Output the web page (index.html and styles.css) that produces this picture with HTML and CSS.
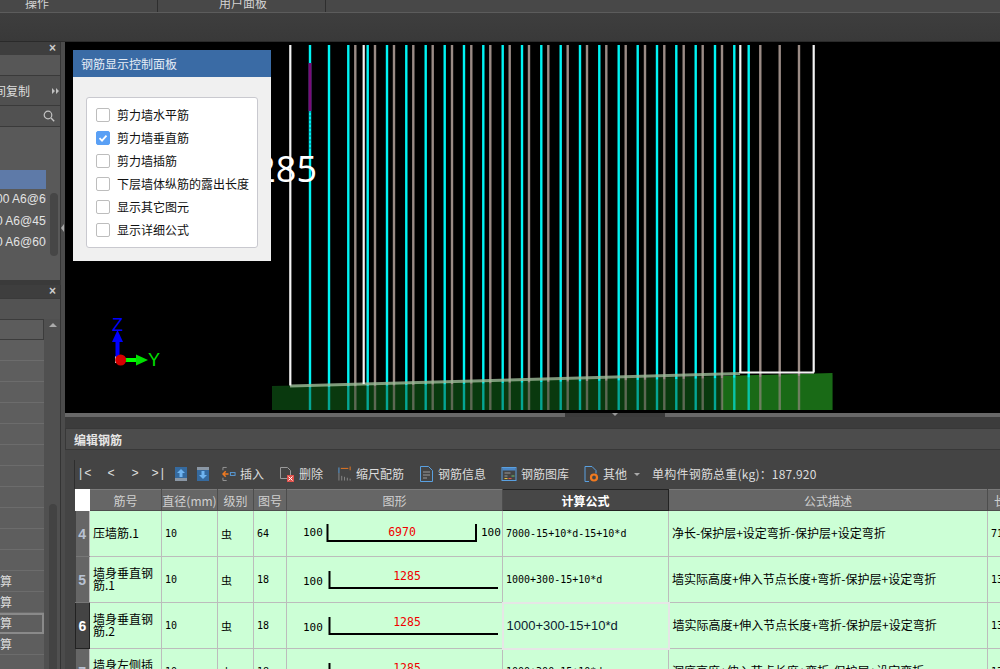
FILE: index.html
```html
<!DOCTYPE html>
<html lang="zh-CN">
<head>
<meta charset="utf-8">
<title>编辑钢筋</title>
<link rel="stylesheet" href="styles.css">
</head>
<body>
<header class="ribbon">
  <div class="ribbon-tabs">
    <div class="ribbon-tab t1">操作</div>
    <div class="ribbon-tab t2">用户面板</div>
  </div>
  <div class="ribbon-body"></div>
</header>
<div class="main">
  <aside class="side">
    <section class="dock dock-a">
      <div class="dock-head"><span class="close">×</span></div>
      <div class="row-plain"></div>
      <div class="row-copy"><span class="copy-text">间复制</span><svg class="more" width="7" height="6" viewBox="0 0 7 6"><path d="M0 0l3 3-3 3zM4 0l3 3-3 3z" fill="#c0c0c0"/></svg></div>
      <div class="row-search">
        <svg class="search-ico" width="12" height="12" viewBox="0 0 12 12"><circle cx="5" cy="5" r="3.8" fill="none" stroke="#c4c4c4" stroke-width="1.2"/><path d="M8 8l3.2 3.2" stroke="#c4c4c4" stroke-width="1.4"/></svg>
      </div>
      <div class="list">
        <div class="list-gap"></div>
        <div class="list-sel"></div>
        <div class="list-items">
          <div class="list-item i1">00 A6@600</div>
          <div class="list-item i2">0 A6@450</div>
          <div class="list-item i2">0 A6@600</div>
          <div class="thumb-small"></div>
        </div>
      </div>
    </section>
    <section class="dock dock-b">
      <div class="dock-head"><span class="close">×</span></div>
      <div class="row-plain2"></div>
      <div class="grid-wrap">
        <div class="grid-rows">
          <div class="grid-head"></div>
          <div class="grid-row"></div><div class="grid-row"></div><div class="grid-row"></div>
          <div class="grid-row"></div><div class="grid-row"></div><div class="grid-row"></div>
          <div class="grid-row"></div><div class="grid-row"></div><div class="grid-row"></div>
          <div class="grid-row"></div><div class="grid-row"></div>
          <div class="grid-row"><span>算</span></div>
          <div class="grid-row"><span>算</span></div>
          <div class="grid-row sel"><span>算</span></div>
          <div class="grid-row"><span>算</span></div>
          <div class="grid-row"></div>
        </div>
        <div class="scroll-track"><span class="scroll-up"></span><div class="scroll-thumb"></div></div>
      </div>
    </section>
  </aside>
  <div class="gutter"><span class="gutter-arrow"></span></div>
  <div class="work">
    <div class="viewport">
      <svg class="scene" width="935" height="371" viewBox="65 42 935 371">
        <polygon points="272,386 722,376 722,410 272,410" fill="#0a3a0f"/>
        <polygon points="722,376 832.500,373 832.500,410 722,410" fill="#1a6b16"/>
        <path class="bars-cyan" d="M310 45V410M329 45V410M348.300 45V410M367.700 45V410M387 45V410M406.300 45V410M425.700 45V410M444.700 45V410M464 45V410M483.300 45V410M502.700 45V410M522 45V410M541.300 45V410M560.700 45V410M580 45V410M599.300 45V410M618.700 45V410M637.700 45V410M657 45V410M676.300 45V410M695.700 45V410M715 45V410M734.300 45V410M748.700 45V410"/>
        <path class="bars-gray" d="M355.300 45V410M375 45V410M394 45V410M413.300 45V410M432.700 45V410M452 45V410M471.300 45V410M490.300 45V410M509.700 45V410M529 45V410M548.300 45V410M567.700 45V410M587 45V410M606.300 45V410M625.700 45V410M645 45V410M664.300 45V410M683.700 45V410M702.700 45V410M722 45V410M760.300 45V410M779.700 45V410M799 45V410"/>
        <polygon points="272,388 722,378 722,410 272,410" fill="#0a3a0f" opacity="0.42"/>
        <polygon points="722,378 832.500,375 832.500,410 722,410" fill="#1a6b16" opacity="0.35"/>
        <path class="band" d="M290 386L740 373.500"/>
        <path class="bars-white" d="M290.300 45V385.500M363.700 45V384M740.300 45V373M813.700 45V372.500M740 372.500H814"/>
        <path class="purple" d="M310 63V111"/>
        <path class="purple-dash" d="M310 111V150"/>
        <text class="dim-text" x="317" y="182" text-anchor="end">1285</text>
        <rect x="115" y="356" width="4" height="7" fill="#c8c8c8"/>
        <rect x="115.500" y="341" width="4" height="16" fill="#0000ff"/>
        <polygon points="117.500,330 123,342 112,342" fill="#0000ff"/>
        <rect x="124" y="358" width="13" height="4" fill="#00ff00"/>
        <polygon points="148,360 136,354.500 136,365.500" fill="#00e000"/>
        <circle cx="120.700" cy="360" r="5.500" fill="#d60000"/>
        <text class="axis-z" x="112" y="331">Z</text>
        <text class="axis-y" x="148" y="366">Y</text>
      </svg>
      <div class="control-panel">
        <div class="control-title">钢筋显示控制面板</div>
        <div class="control-body">
          <div class="control-box">
            <label class="opt"><span class="check"></span>剪力墙水平筋</label>
            <label class="opt"><span class="check on"><svg width="14" height="14" viewBox="0 0 14 14"><path d="M3.500 7.200l2.500 2.500 4.500-5" fill="none" stroke="#fff" stroke-width="1.800"/></svg></span>剪力墙垂直筋</label>
            <label class="opt"><span class="check"></span>剪力墙插筋</label>
            <label class="opt"><span class="check"></span>下层墙体纵筋的露出长度</label>
            <label class="opt"><span class="check"></span>显示其它图元</label>
            <label class="opt"><span class="check"></span>显示详细公式</label>
          </div>
        </div>
      </div>
    </div>
    <div class="splitter"><div class="splitter-grip"><span class="splitter-caret"></span></div></div>
    <div class="split-gap"></div>
    <div class="editor-title">编辑钢筋</div>
    <div class="editor">
      <div class="toolbar">
        <span class="nav n1">|&lt;</span><span class="nav n2">&lt;</span><span class="nav n3">&gt;</span><span class="nav n4">&gt;|</span>
        <svg class="tool-ico ud" width="12" height="14" viewBox="0 0 12 14"><rect width="12" height="14" fill="#8a97a5"/><rect x="0" y="0" width="12" height="11" fill="#356a9f"/><path d="M6 2l4 4H7.500v4h-3V6H2z" fill="#6fb4f0"/></svg>
        <svg class="tool-ico ud" width="12" height="14" viewBox="0 0 12 14"><rect width="12" height="14" fill="#8a97a5"/><rect x="0" y="3" width="12" height="11" fill="#356a9f"/><path d="M6 12l4-4H7.500V4h-3v4H2z" fill="#6fb4f0"/></svg>
        <span class="tool first">
          <svg width="14" height="16" viewBox="0 0 15 16"><path d="M1 1h4M1 1v3M1 15h4M1 15v-3" stroke="#9a9a9a" fill="none"/><path d="M1 8h6M4 5L1 8l3 3" stroke="#f07a20" stroke-width="1.600" fill="none"/><rect x="9" y="6.500" width="5" height="3" fill="none" stroke="#5aa0e0"/></svg>插入</span>
        <span class="tool">
          <svg width="16" height="16" viewBox="0 0 16 16"><path d="M1.500 1.500h7l3 3v8h-10z" fill="none" stroke="#9a9a9a"/><rect x="8" y="9" width="7" height="7" fill="#e0524c"/><path d="M9.500 10.500l4 4M13.500 10.500l-4 4" stroke="#fff"/></svg>删除</span>
        <span class="tool">
          <svg width="14" height="16" viewBox="0 0 15 16"><path d="M1 7v8M4 15v-5M7 15v-4M10 15v-3M13 15v-2" stroke="#8a8a8a" fill="none"/><path d="M1 1v6" stroke="#5aa0e0" fill="none"/><path d="M3 2h8" stroke="#f07a20"/><path d="M13 0v4" stroke="#f07a20"/></svg>缩尺配筋</span>
        <span class="tool">
          <svg width="15" height="16" viewBox="0 0 14 16"><path d="M1 .5h8l4 4v11H1z" fill="none" stroke="#5aa0e0"/><path d="M3.500 6h7M3.500 9h7M3.500 12h4" stroke="#9a9a9a"/></svg>钢筋信息</span>
        <span class="tool">
          <svg width="16" height="14" viewBox="0 0 15 14"><rect x=".5" y=".5" width="14" height="13" fill="none" stroke="#5aa0e0"/><rect x="1" y="1" width="13" height="2.500" fill="#4a86c5"/><path d="M3 6h6M3 9h3" stroke="#9a9a9a"/><path d="M3 11.500h3" stroke="#e0c040"/><path d="M7 11.500h3" stroke="#e0524c"/><path d="M10 9h3" stroke="#6fc06f"/></svg>钢筋图库</span>
        <span class="tool">
          <svg width="15" height="16" viewBox="0 0 15 16"><path d="M1 .5h7l4 4v3M5 15.500H1V.5" fill="none" stroke="#5aa0e0"/><circle cx="10" cy="11.500" r="3" fill="none" stroke="#f07a20" stroke-width="2.200"/></svg>其他</span>
        <span class="caret"></span>
        <span class="total">单构件钢筋总重(kg)：187.920</span>
      </div>
      <table class="rebar">
        <colgroup>
          <col class="c0"><col class="c1"><col class="c2"><col class="c3"><col class="c4"><col class="c5"><col class="c6"><col class="c7"><col class="c8">
        </colgroup>
        <thead>
          <tr>
            <th class="corner"></th><th>筋号</th><th>直径(mm)</th><th>级别</th><th>图号</th><th>图形</th><th class="active">计算公式</th><th>公式描述</th><th class="long">长度(mm)</th>
          </tr>
        </thead>
        <tbody>
          <tr>
            <th class="num">4</th><td class="name">压墙筋.1</td><td class="mono">10</td><td class="grade">虫</td><td class="mono">64</td>
            <td class="shape"><svg width="215" height="45" viewBox="287 512 215 45"><text class="s-end" x="303" y="537">100</text><path class="s-line" d="M327.500 525V542H476V525"/><text class="s-red" x="402" y="537" text-anchor="middle">6970</text><text class="s-end" x="481" y="537">100</text></svg></td>
            <td class="mono">7000-15+10*d-15+10*d</td><td class="desc">净长-保护层+设定弯折-保护层+设定弯折</td><td class="mono">7170</td>
          </tr>
          <tr>
            <th class="num">5</th><td class="name">墙身垂直钢筋.1</td><td class="mono">10</td><td class="grade">虫</td><td class="mono">18</td>
            <td class="shape"><svg width="215" height="45" viewBox="287 558 215 45"><text class="s-end" x="303" y="586">100</text><path class="s-line" d="M329.500 572V589H498"/><text class="s-red" x="407" y="581" text-anchor="middle">1285</text></svg></td>
            <td class="mono">1000+300-15+10*d</td><td class="desc">墙实际高度+伸入节点长度+弯折-保护层+设定弯折</td><td class="mono">1385</td>
          </tr>
          <tr>
            <th class="num cur">6</th><td class="name">墙身垂直钢筋.2</td><td class="mono">10</td><td class="grade">虫</td><td class="mono">18</td>
            <td class="shape"><svg width="215" height="45" viewBox="287 604 215 45"><text class="s-end" x="303" y="632">100</text><path class="s-line" d="M329.500 618V635H498"/><text class="s-red" x="407" y="627" text-anchor="middle">1285</text></svg></td>
            <td class="edit">1000+300-15+10*d</td><td class="desc">墙实际高度+伸入节点长度+弯折-保护层+设定弯折</td><td class="mono">1385</td>
          </tr>
          <tr>
            <th class="num">7</th><td class="name">墙身左侧插筋.1</td><td class="mono">10</td><td class="grade">虫</td><td class="mono">18</td>
            <td class="shape"><svg width="215" height="45" viewBox="287 650 215 45"><text class="s-end" x="303" y="678">100</text><path class="s-line" d="M329.500 664V681H498"/><text class="s-red" x="407" y="673" text-anchor="middle">1285</text></svg></td>
            <td class="mono">1000+300-15+10*d</td><td class="desc">洞底高度+伸入节点长度+弯折-保护层+设定弯折</td><td class="mono">1385</td>
          </tr>
        </tbody>
      </table>
    </div>
  </div>
</div>
</body>
</html>
```

FILE: styles.css
```css
* { box-sizing: border-box; }
html, body { margin: 0; height: 100%; }
body {
  width: 1000px; height: 669px; overflow: hidden; background: #3c3c3c;
  font: 12px "Noto Sans CJK SC", "Liberation Sans", sans-serif; color: #ddd;
  display: flex; flex-direction: column;
}
.ribbon { flex: none; height: 42px; display: flex; flex-direction: column; }
.ribbon-tabs { height: 13px; flex: none; display: flex; background: #484848; border-bottom: 1px solid #5c5c5c; overflow: hidden; }
.ribbon-tab { height: 12px; line-height: 6px; text-align: center; border-right: 1px solid #2e2e2e; color: #d4d4d4; }
.t1 { width: 158px; padding-right: 83px; }
.t2 { width: 168px; padding-left: 3px; }
.ribbon-body { flex: 1; background: linear-gradient(#3e3e3e, #393939); border-bottom: 1px solid #2a2a2a; }

.main { flex: 1; min-height: 0; display: flex; }
.side { width: 61px; flex: none; display: flex; flex-direction: column; gap: 5px; background: #3a3a3a; overflow: hidden; }
.dock { display: flex; flex-direction: column; background: #555; border-right: 1px solid #333; }
.dock-a { height: 238px; flex: none; }
.dock-b { flex: 1; min-height: 0; }
.dock-head { height: 13px; flex: none; background: #3e3e3e; display: flex; justify-content: flex-end; padding-right: 4px; }
.close { font: bold 12px/12px "Liberation Sans", sans-serif; color: #ccc; }
.row-plain { height: 21px; flex: none; background: #575757; border-bottom: 1px solid #3a3a3a; }
.row-copy { height: 30px; flex: none; background: #505050; border-bottom: 1px solid #3a3a3a; display: flex; align-items: center; overflow: hidden; position: relative; }
.copy-text { margin-left: -6px; white-space: nowrap; color: #ddd; font-size: 12px; }
.more { flex: none; margin-left: 22px; }
.row-search { height: 21px; flex: none; background: #515151; border-bottom: 1px solid #3a3a3a; display: flex; align-items: center; justify-content: flex-end; padding-right: 5px; }
.list { flex: 1; background: #595959; overflow: hidden; }
.list-gap { height: 43px; }
.list-sel { width: 46px; height: 19px; background: #5e7aa8; }
.list-items { position: relative; padding-top: 0; }
.list-item { height: 21.500px; white-space: nowrap; overflow: hidden; font: 12px/21px "Liberation Sans", sans-serif; color: #e4e4e4; }
.i1 { margin-left: -4px; width: 50px; }
.i2 { margin-left: -4px; width: 50px; }
.thumb-small { position: absolute; top: 4px; left: 50px; width: 8px; height: 63px; border-radius: 4px; background: #464646; }

.row-plain2 { height: 21px; flex: none; background: #535353; border-top: 1px solid #3a3a3a; }
.grid-wrap { flex: 1; min-height: 0; display: flex; overflow: hidden; }
.grid-rows { width: 44px; flex: none; }
.grid-head { height: 21px; background: #5c5c5c; border: 1px solid #3c3c3c; border-left: 0; }
.grid-row { height: 21px; background: #5e5e5e; border-bottom: 1px solid #6c6c6c; color: #ddd; font-size: 12px; line-height: 20px; overflow: hidden; }
.grid-row.sel { border: 2px solid #8a8a8a; line-height: 16px; border-left: 0; }
.scroll-track { flex: 1; position: relative; background: #505050; }
.scroll-up { position: absolute; top: 4px; left: 5px; border: 4px solid transparent; border-top: 0; border-bottom: 4px solid #aaa; }
.scroll-thumb { position: absolute; top: 185px; left: 5px; width: 8px; bottom: -30px; border-radius: 4px; background: #434343; }

.gutter { width: 4px; flex: none; background: #4b4b4b; position: relative; }
.gutter-arrow { position: absolute; top: 182px; left: 0; border: 4px solid transparent; border-left: 0; border-right: 3px solid #aaa; }

.work { flex: 1; min-width: 0; display: flex; flex-direction: column; overflow: hidden; }
.viewport { height: 371px; flex: none; background: #000; position: relative; overflow: hidden; }
.scene { display: block; }
.bars-cyan { stroke: #00f4f4; stroke-width: 2.400; fill: none; }
.bars-gray { stroke: #9a8b85; stroke-width: 2.400; fill: none; }
.bars-white { stroke: #f4f4f4; stroke-width: 2.200; fill: none; }
.band { stroke: #9dbc98; stroke-width: 3; fill: none; opacity: .8; }
.purple { stroke: #7a0a78; stroke-width: 3; fill: none; }
.purple-dash { stroke: #00b8c8; stroke-width: 2; stroke-dasharray: 2 2; fill: none; }
.dim-text { font: 36px "Open Sans", sans-serif; fill: #fff; }
.axis-z { font: 18px "Liberation Sans", sans-serif; fill: #0000ff; }
.axis-y { font: 18px "Liberation Sans", sans-serif; fill: #00e000; }

.control-panel { position: absolute; left: 8px; top: 8px; width: 198px; height: 211px; background: #f0f0f0; display: flex; flex-direction: column; }
.control-title { height: 27px; flex: none; background: #3a6ba5; color: #e6edf6; padding-left: 8px; line-height: 27px; font-size: 12px; }
.control-body { flex: 1; padding: 20px 13px 13px; }
.control-box { height: 151px; background: #fff; border: 1px solid #c9c9cf; border-radius: 3px; padding: 5px 9px; display: flex; flex-direction: column; }
.opt { height: 23px; flex: none; display: flex; align-items: center; gap: 7px; color: #111; font-size: 12px; white-space: nowrap; }
.check { width: 14px; height: 14px; flex: none; border: 1px solid #bdbdbd; border-radius: 2px; background: #fff; }
.check.on { background: #5aa0f5; border-color: #5aa0f5; }
.check svg { display: block; margin: -1px; }

.splitter { height: 4px; flex: none; background: #686868; display: flex; padding-left: 500px; }
.splitter-grip { width: 100px; background: #3a3a3a; display: flex; justify-content: center; }
.splitter-caret { border: 3px solid transparent; border-top: 3px solid #999; border-bottom: 0; width: 0; height: 0; }
.split-gap { height: 11px; flex: none; background: #3c3c3c; }
.editor-title { height: 22px; flex: none; background: #4c4c4c; border: 1px solid #383838; border-right: 0; padding-left: 8px; font-weight: 700; line-height: 21px; color: #e6e6e6; }
.editor { flex: 1; min-height: 0; background: #444; padding: 10px 0 0 9px; overflow: hidden; }
.toolbar { height: 29px; width: 1000px; border-left: 1px solid #2e2e2e; display: flex; align-items: center; padding: 0 0 2px 2px; color: #dcdcdc; white-space: nowrap; }
.nav { flex: none; font: 12px "Liberation Mono", monospace; color: #e0e0e0; }
.n1 { width: 30.500px; }
.n2 { width: 24px; }
.n3 { width: 20px; }
.n4 { width: 23.500px; }
.tool-ico { flex: none; }
.ud { margin-right: 10px; }
.tool { display: flex; align-items: center; gap: 4px; margin-right: 15px; }
.tool svg { flex: none; }
.tool.first { margin-left: 3px; }
.caret { border: 3px solid transparent; border-top: 3px solid #aaa; border-bottom: 0; margin: 2px 12px 0 -8px; }
.total { letter-spacing: .2px; }

.rebar { border-collapse: collapse; table-layout: fixed; width: 1012px; margin-left: 1px; }
.c0 { width: 14px; } .c1 { width: 72px; } .c2 { width: 56px; } .c3 { width: 36px; } .c4 { width: 33px; }
.c5 { width: 216px; } .c6 { width: 166px; } .c7 { width: 319px; } .c8 { width: 100px; }
.rebar thead th { height: 21px; background: #666; color: #d0d0d0; font-weight: 400; border: 1px solid #4d4d4d; border-top-color: #7a7a7a; padding: 0; font-size: 12px; overflow: hidden; white-space: nowrap; }
.rebar thead th.corner { background: #fff; border-color: #fff; }
.rebar thead th.active { background: #474747; color: #fff; font-weight: 700; border: 1px solid #222; }
.rebar thead th.long { text-align: left; padding-left: 6px; }
.rebar td { height: 46px; padding: 0 0 0 3px; background: #ccffd6; border: 1px solid #bcbcbc; color: #000; overflow: hidden; white-space: nowrap; font-size: 12px; }
.rebar .num { background: #666; color: #b9c2d3; border: 0; border-bottom: 1px solid #777; font: bold 14px "Liberation Sans", sans-serif; padding: 0; }
.rebar .num.cur { background: #444; color: #fff; border: 1px solid #222; }
.rebar .name { white-space: normal; word-break: break-all; padding: 0 6px 2px 3px; line-height: 12px; font-size: 12px; }
.rebar .mono { font: 10px "DejaVu Sans Mono", monospace; }
.rebar .grade { font-size: 11px; text-align: left; padding-left: 3px; }
.rebar .shape { padding: 0; }
.rebar .shape svg { display: block; }
.rebar .edit { font: 13px "Liberation Sans", sans-serif; color: #0a2030; border: 2px solid #e6e6e6; }
.rebar .desc { padding: 0 0 2px 3px; }
.s-end { font: 11px "DejaVu Sans Mono", monospace; fill: #000; }
.s-red { font: 11.500px "DejaVu Sans Mono", monospace; fill: #f00000; }
.s-line { fill: none; stroke: #000; stroke-width: 2; }
```
